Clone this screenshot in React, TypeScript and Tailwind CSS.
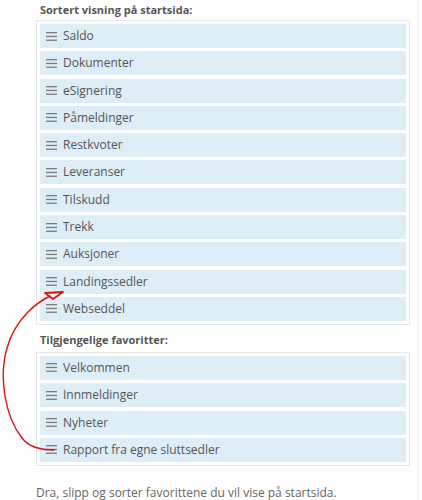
import React from 'react';

const sorted = [
  'Saldo',
  'Dokumenter',
  'eSignering',
  'Påmeldinger',
  'Restkvoter',
  'Leveranser',
  'Tilskudd',
  'Trekk',
  'Auksjoner',
  'Landingssedler',
  'Webseddel',
];

const available = ['Velkommen', 'Innmeldinger', 'Nyheter', 'Rapport fra egne sluttsedler'];

function Handle() {
  return (
    <svg width="11" height="9" viewBox="0 0 11 9" className="shrink-0">
      <rect x="0" y="0" width="11" height="1.3" fill="#7a7a7a" />
      <rect x="0" y="3.8" width="11" height="1.3" fill="#7a7a7a" />
      <rect x="0" y="7.6" width="11" height="1.3" fill="#7a7a7a" />
    </svg>
  );
}

function SortList({ items }: { items: string[] }) {
  return (
    <div className="flex w-[374px] flex-col gap-[3.3px] border border-[#e6e6e6] p-[3px]">
      {items.map((item) => (
        <div key={item} className="flex h-6 items-center gap-[6px] bg-[#ddeef7] pl-[6px] text-[12px] text-[#555]">
          <Handle />
          <span>{item}</span>
        </div>
      ))}
    </div>
  );
}

export default function App() {
  return (
    <div className="relative h-[500px] w-[422px] overflow-hidden bg-white font-['Open_Sans',sans-serif]">
      <div className="pl-9 pt-[3px]">
        <h3 className="pl-1 text-[11px] leading-[14px] font-bold text-[#555]">Sortert visning på startsida:</h3>
        <div className="mt-[3px]">
          <SortList items={sorted} />
        </div>
        <h3 className="mt-[8px] pl-1 text-[11px] leading-[14px] font-bold text-[#555]">Tilgjengelige favoritter:</h3>
        <div className="mt-[5px]">
          <SortList items={available} />
        </div>
        <p className="mt-[18px] text-[12px] text-[#666]">Dra, slipp og sorter favorittene du vil vise på startsida.</p>
      </div>
      <div className="absolute right-[3px] top-0 h-full w-px bg-[#f0f0f0]" />
      <svg className="absolute left-0 top-0" width="422" height="500" viewBox="0 0 422 500" fill="none">
        <path
          d="M54 450 C40 450 28 446 22 438 C14 428 8 414 5 396 C2 378 3 362 7 348 C11 334 18 322 28 312 C35 305 42 300 50 296"
          stroke="#d81010"
          strokeWidth="1.4"
          strokeLinecap="round"
        />
        <path d="M45 293 L63 292 L53 299 Z" stroke="#e01010" strokeWidth="1.8" strokeLinejoin="round" fill="none" />
      </svg>
    </div>
  );
}
